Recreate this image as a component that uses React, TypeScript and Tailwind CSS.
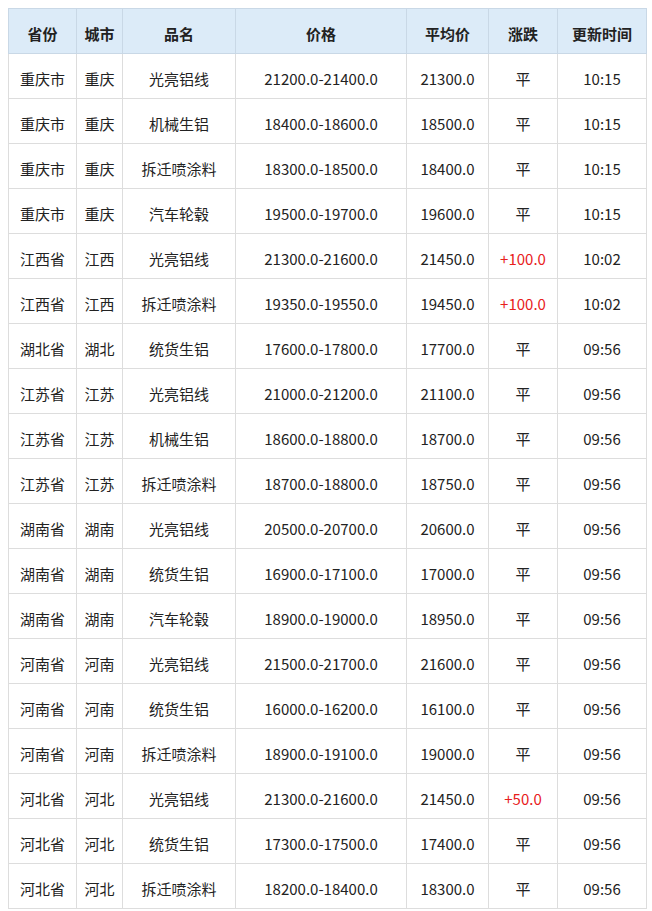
const rows: [string, string, string, string, string, string, string][] = [
  ['重庆市', '重庆', '光亮铝线', '21200.0-21400.0', '21300.0', '平', '10:15'],
  ['重庆市', '重庆', '机械生铝', '18400.0-18600.0', '18500.0', '平', '10:15'],
  ['重庆市', '重庆', '拆迁喷涂料', '18300.0-18500.0', '18400.0', '平', '10:15'],
  ['重庆市', '重庆', '汽车轮毂', '19500.0-19700.0', '19600.0', '平', '10:15'],
  ['江西省', '江西', '光亮铝线', '21300.0-21600.0', '21450.0', '+100.0', '10:02'],
  ['江西省', '江西', '拆迁喷涂料', '19350.0-19550.0', '19450.0', '+100.0', '10:02'],
  ['湖北省', '湖北', '统货生铝', '17600.0-17800.0', '17700.0', '平', '09:56'],
  ['江苏省', '江苏', '光亮铝线', '21000.0-21200.0', '21100.0', '平', '09:56'],
  ['江苏省', '江苏', '机械生铝', '18600.0-18800.0', '18700.0', '平', '09:56'],
  ['江苏省', '江苏', '拆迁喷涂料', '18700.0-18800.0', '18750.0', '平', '09:56'],
  ['湖南省', '湖南', '光亮铝线', '20500.0-20700.0', '20600.0', '平', '09:56'],
  ['湖南省', '湖南', '统货生铝', '16900.0-17100.0', '17000.0', '平', '09:56'],
  ['湖南省', '湖南', '汽车轮毂', '18900.0-19000.0', '18950.0', '平', '09:56'],
  ['河南省', '河南', '光亮铝线', '21500.0-21700.0', '21600.0', '平', '09:56'],
  ['河南省', '河南', '统货生铝', '16000.0-16200.0', '16100.0', '平', '09:56'],
  ['河南省', '河南', '拆迁喷涂料', '18900.0-19100.0', '19000.0', '平', '09:56'],
  ['河北省', '河北', '光亮铝线', '21300.0-21600.0', '21450.0', '+50.0', '09:56'],
  ['河北省', '河北', '统货生铝', '17300.0-17500.0', '17400.0', '平', '09:56'],
  ['河北省', '河北', '拆迁喷涂料', '18200.0-18400.0', '18300.0', '平', '09:56'],
]

const headers = ['省份', '城市', '品名', '价格', '平均价', '涨跌', '更新时间']
const widths = ['w-[68px]', 'w-[46px]', 'w-[113px]', 'w-[171px]', 'w-[82px]', 'w-[69px]', 'w-[89px]']

export default function App() {
  return (
    <div className="bg-white p-2 font-['Noto_Sans_CJK_SC','Noto_Sans',sans-serif] text-[15px] text-[#222]">
      <table className="w-[638px] table-fixed border-collapse">
        <colgroup>
          {widths.map((w) => (
            <col key={w} className={w} />
          ))}
        </colgroup>
        <thead>
          <tr className="h-[45px] bg-[#dcebf8]">
            {headers.map((h) => (
              <th key={h} className="border border-[#c9d8e6] pt-[6px] text-center font-bold">
                {h}
              </th>
            ))}
          </tr>
        </thead>
        <tbody>
          {rows.map((r, i) => (
            <tr key={i} className="h-[45px]">
              {r.map((c, j) => (
                <td
                  key={j}
                  className={`border border-[#dddddd] pt-[6px] text-center ${j === 5 && c.startsWith('+') ? 'text-[#e8201c]' : ''}`}
                >
                  {c}
                </td>
              ))}
            </tr>
          ))}
        </tbody>
      </table>
    </div>
  )
}
